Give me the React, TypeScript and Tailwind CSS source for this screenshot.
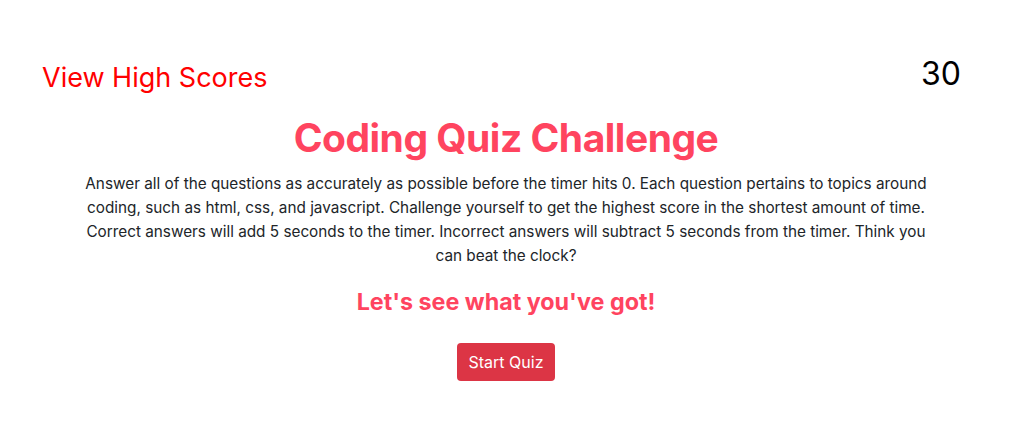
export default function App() {
  return (
    <div className="min-h-[444px] w-[1012px] bg-white font-['Inter',sans-serif] text-[#212529]">
      <header className="flex items-start justify-between pl-[42px] pr-[51px] pt-[56px]">
        <a href="#" className="mt-[4px] text-[27px] leading-[36px] text-[#ff0000]">
          View High Scores
        </a>
        <span className="text-[32px] leading-[36px] text-black">30</span>
      </header>

      <main className="mx-auto mt-[18px] flex max-w-[860px] flex-col items-center text-center">
        <h1 className="text-[39px] font-bold leading-[48px] tracking-[-0.5px] text-[#ff445f]">
          Coding Quiz Challenge
        </h1>
        <p className="mt-[10px] text-[15.3px] leading-[24px]">
          Answer all of the questions as accurately as possible before the timer hits 0. Each question
          pertains to topics around coding, such as html, css, and javascript. Challenge yourself to get
          the highest score in the shortest amount of time. Correct answers will add 5 seconds to the
          timer. Incorrect answers will subtract 5 seconds from the timer. Think you can beat the clock?
        </p>
        <h2 className="mt-[18px] text-[23.3px] font-bold leading-[32px] text-[#ff445f]">
          Let's see what you've got!
        </h2>
        <button className="mt-[25px] h-[38px] rounded-[4px] bg-[#dc3545] px-[12px] text-[16px] leading-[24px] text-white">
          Start Quiz
        </button>
      </main>
    </div>
  );
}
